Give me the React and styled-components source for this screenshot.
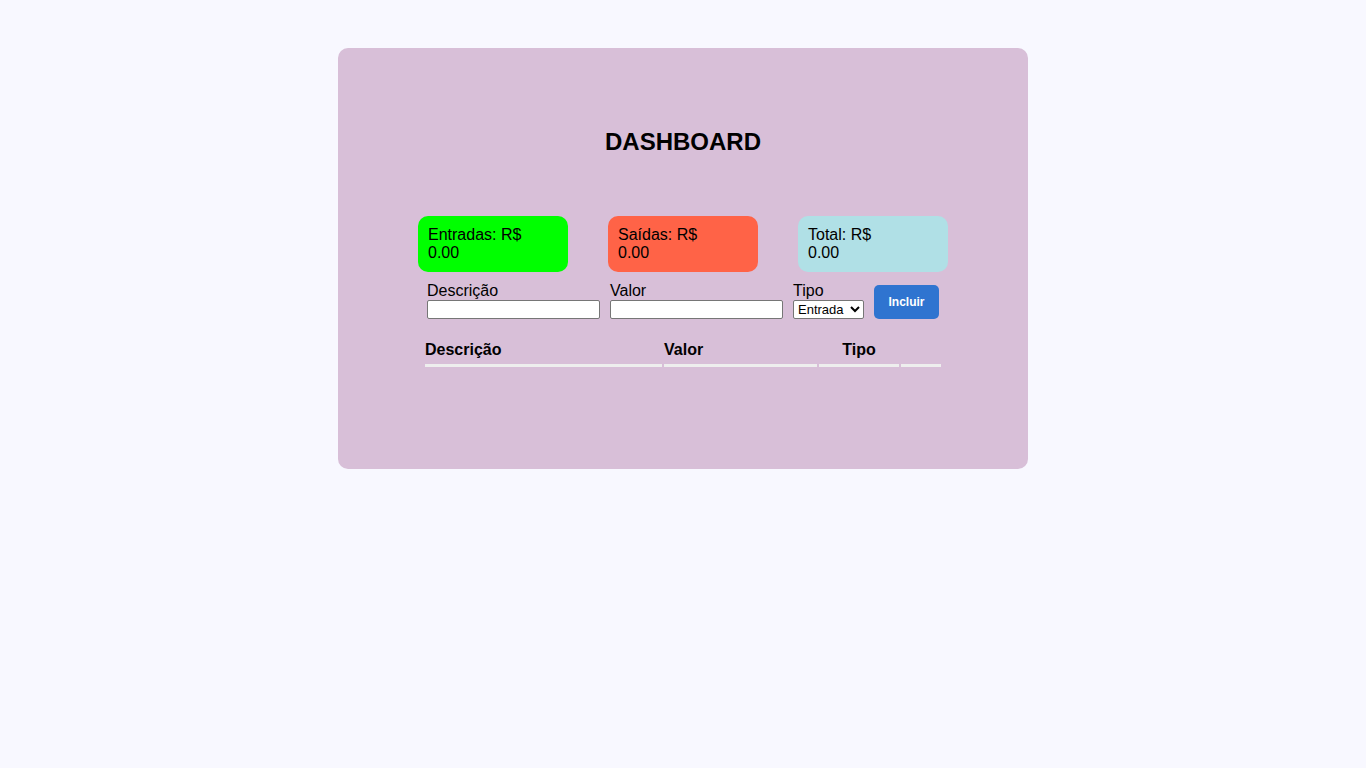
import { useState } from 'react';
import styled, { createGlobalStyle } from 'styled-components';

const GlobalStyle = createGlobalStyle`
  body {
    margin: 0;
    background: #f8f8ff;
    font-family: "Liberation Sans", Arial, sans-serif;
  }
`;

const Panel = styled.div`
  width: 690px;
  min-height: 421px;
  margin: 48px auto 0;
  padding-top: 80px;
  box-sizing: border-box;
  background: #d8bfd8;
  border-radius: 10px;
  display: flex;
  flex-direction: column;
  align-items: center;
`;

const Title = styled.h1`
  margin: 0;
  font-size: 24px;
  line-height: 28px;
  font-weight: bold;
  color: #000;
`;

const Cards = styled.div`
  display: flex;
  gap: 40px;
  margin-top: 60px;
`;

const Card = styled.div`
  width: 150px;
  height: 56px;
  box-sizing: border-box;
  padding: 10px;
  border-radius: 10px;
  background: ${props => props.color};
  font-size: 16px;
  line-height: 18px;
  color: #000;
`;

const Form = styled.div`
  display: flex;
  align-items: flex-end;
  gap: 10px;
  margin-top: 10px;
`;

const Field = styled.label`
  display: flex;
  flex-direction: column;
  font-size: 16px;
  line-height: 18px;
  color: #000;
`;

const TextInput = styled.input`
  width: ${props => props.width || 173}px;
  height: 19px;
  box-sizing: border-box;
  margin: 0;
  border: 1px solid #767676;
  border-radius: 2px;
  background: #fff;
`;

const Select = styled.select`
  width: 71px;
  height: 19px;
  margin: 0;
  box-sizing: border-box;
  font-family: "Liberation Sans", Arial, sans-serif;
  font-size: 13px;
  padding: 0;
  border: 1px solid #767676;
  border-radius: 2px;
  background: #fff;
`;

const Button = styled.button`
  height: 34px;
  width: 65px;
  padding: 0;
  border: none;
  border-radius: 5px;
  background: #2f74d0;
  color: #fff;
  font-family: "Liberation Sans", Arial, sans-serif;
  font-size: 12px;
  font-weight: bold;
  cursor: pointer;
`;

const Table = styled.table`
  width: 520px;
  margin-top: 19px;
  border-spacing: 2px;
`;

const Th = styled.th`
  width: ${props => props.w}px;
  text-align: ${props => props.align || 'left'};
  font-size: 16px;
  line-height: 18px;
  padding: 1px 0 5px;
  border-bottom: 3px solid #eeeeee;
  color: #000;
`;

export default function App() {
  const [tipo, setTipo] = useState('entrada');

  return (
    <>
      <GlobalStyle />
      <Panel>
        <Title>DASHBOARD</Title>
        <Cards>
          <Card color="#00ff00">Entradas: R$<br />0.00</Card>
          <Card color="#ff6347">Saídas: R$<br />0.00</Card>
          <Card color="#b0e0e6">Total: R$<br />0.00</Card>
        </Cards>
        <Form>
          <Field>
            Descrição
            <TextInput type="text" />
          </Field>
          <Field>
            Valor
            <TextInput type="number" />
          </Field>
          <Field>
            Tipo
            <Select value={tipo} onChange={e => setTipo(e.target.value)}>
              <option value="entrada">Entrada</option>
              <option value="saida">Saída</option>
            </Select>
          </Field>
          <Button>Incluir</Button>
        </Form>
        <Table>
          <thead>
            <tr>
              <Th w={237}>Descrição</Th>
              <Th w={153}>Valor</Th>
              <Th w={80} align="center">Tipo</Th>
              <Th w={40}></Th>
            </tr>
          </thead>
          <tbody></tbody>
        </Table>
      </Panel>
    </>
  );
}
